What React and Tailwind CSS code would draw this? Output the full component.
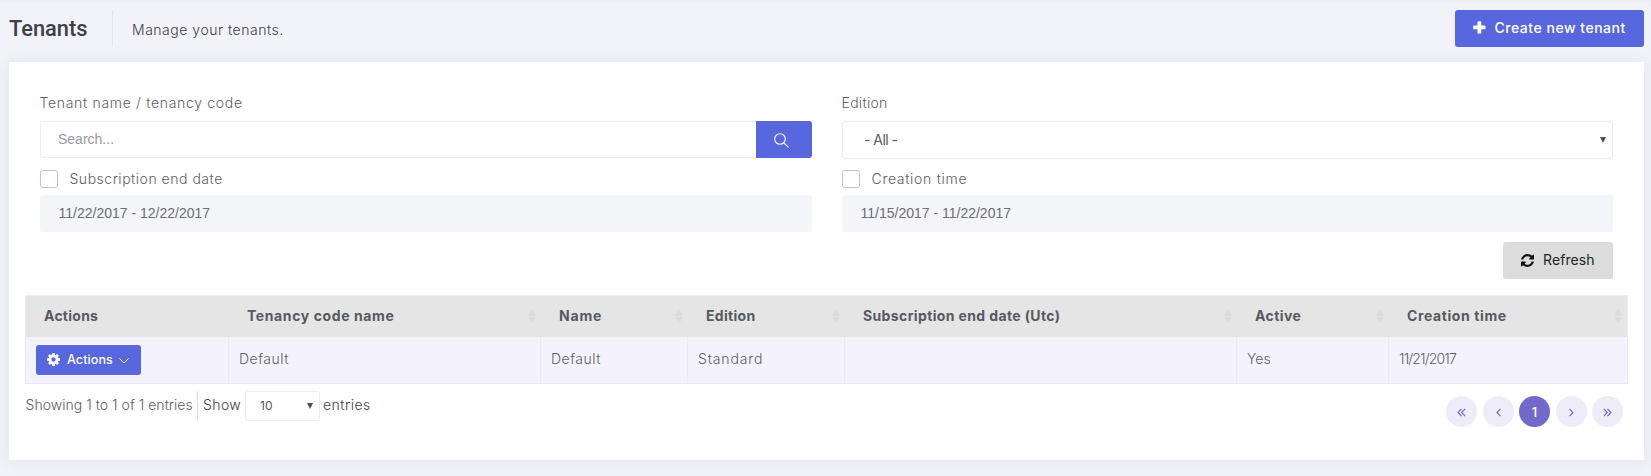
const columns = [
  { label: "Actions", head: "w-[203px] tracking-[0.25px]" },
  { label: "Tenancy code name", head: "w-[312px] tracking-[0.6px]", sort: true, value: "Default", text: "tracking-[0.5px]" },
  { label: "Name", head: "w-[147px] tracking-[0.8px]", sort: true, value: "Default", text: "tracking-[0.5px]" },
  { label: "Edition", head: "w-[157px] tracking-[0.3px]", sort: true, value: "Standard", text: "tracking-[0.85px]" },
  { label: "Subscription end date (Utc)", head: "w-[392px] tracking-[0.37px]", sort: true, value: "" },
  { label: "Active", head: "w-[152px] tracking-[0.4px]", sort: true, value: "Yes", text: "tracking-[0.1px]" },
  { label: "Creation time", head: "w-[238px] tracking-[0.6px]", sort: true, value: "11/21/2017", text: "tracking-[-0.85px]" },
];

const cellWidths = ["w-[203px]", "w-[312px]", "w-[147px]", "w-[157px]", "w-[392px]", "w-[152px]", "w-[240px] border-r"];

function SortIcon() {
  return (
    <svg width="8" height="15" viewBox="0 0 8 15" fill="#dadbdd" className="mr-[5px] shrink-0">
      <path d="M4 0L8 7H0Z" />
      <path d="M0 8H8L4 15Z" />
    </svg>
  );
}

function SelectArrow() {
  return (
    <svg width="6" height="6" viewBox="0 0 6 6" fill="#4b4d5a">
      <path d="M0 0H6L3 6Z" />
    </svg>
  );
}

function SearchIcon() {
  return (
    <svg width="15" height="15" viewBox="0 0 15 15" fill="none" stroke="#fff" strokeWidth="1.1">
      <circle cx="6" cy="6" r="5.3" />
      <path d="M9.8 9.8L14.5 14.3" />
    </svg>
  );
}

function PlusIcon() {
  return (
    <svg width="13" height="13" viewBox="0 0 13 13" fill="#fff" className="-mt-[2px]">
      <rect x="0.2" y="4.500" width="12.300" height="3.800" rx="0.900" />
      <rect x="4.450" y="0.250" width="3.800" height="12.300" rx="0.900" />
    </svg>
  );
}

function GearIcon() {
  return (
    <svg width="13" height="13" viewBox="128 128 1536 1536" fill="#fff" className="-mt-px">
      <path d="M1152 896q0-106-75-181t-181-75-181 75-75 181 75 181 181 75 181-75 75-181zm512-109v222q0 12-8 23t-20 13l-185 28q-19 54-39 91 35 50 107 138 10 12 10 25t-9 23q-27 37-99 108t-94 71q-12 0-26-9l-138-108q-44 23-91 38-16 136-29 186-7 28-36 28h-222q-14 0-24.500-8.500t-11.500-21.500l-28-184q-49-16-90-37l-141 107q-10 9-25 9-14 0-25-11-126-114-165-168-7-10-7-23 0-12 8-23 15-21 51-66.500t54-70.500q-27-50-41-99l-183-27q-13-2-21-12.500t-8-23.500v-222q0-12 8-23t19-13l186-28q14-46 39-92-40-57-107-138-10-12-10-24 0-10 9-23 26-36 98.500-107.500t94.500-71.500q13 0 26 10l138 107q44-23 91-38 16-136 29-186 7-28 36-28h222q14 0 24.500 8.500t11.500 21.500l28 184q49 16 90 37l142-107q9-9 24-9 13 0 25 10 129 119 165 170 7 8 7 22 0 12-8 23-15 21-51 66.500t-54 70.500q26 50 41 98l183 28q13 2 21 12.500t8 23.500z" />
    </svg>
  );
}

function RefreshIcon() {
  return (
    <svg width="13" height="13" viewBox="0 0 1536 1536" fill="#111" className="-mt-px">
      <path d="M1511 928q0 5-1 7-64 268-268 434.500T764 1536q-146 0-282.500-55T238 1324l-129 129q-19 19-45 19t-45-19-19-45V960q0-26 19-45t45-19h448q26 0 45 19t19 45-19 45l-137 137q71 66 161 102t187 36q134 0 250-65t186-179q11-17 53-117 8-23 30-23h192q13 0 22.500 9.500t9.500 22.500zM1536 128v448q0 26-19 45t-45 19h-448q-26 0-45-19t-19-45 19-45l138-138Q969 256 768 256q-134 0-250 65T332 500q-11 17-53 117-8 23-30 23H50q-13 0-22.500-9.500T18 608v-7q65-268 270-434.500T768 0q146 0 284 55.500T1297 212l130-129q19-19 45-19t45 19 19 45z" />
    </svg>
  );
}

function DateFilter({ label, range, tracking }) {
  return (
    <div>
      <div className="flex h-[18px] items-center">
        <span className="size-[18px] rounded-[3px] border border-[#bdc3d4] bg-white" />
        <span className={"ml-[11.5px] " + tracking}>{label}</span>
      </div>
      <div className="mt-[7px] flex h-[37px] items-center rounded-[3px] bg-[#f4f5f8] pb-[2px] pl-[18.5px] font-['Liberation_Sans',sans-serif] text-[14px] font-normal text-[#6b6d78]">
        {range}
      </div>
    </div>
  );
}

function PageButton({ children, active }) {
  return (
    <span className={active
      ? "flex size-[31px] items-center justify-center rounded-full bg-[#716aca] text-[13px] font-medium text-white"
      : "flex size-[31px] items-center justify-center rounded-full bg-[#eeecf8]"}>
      {children}
    </span>
  );
}

function Chevron({ d, w }) {
  return (
    <svg width={w} height="9" viewBox={"0 0 " + w + " 9"} fill="none" stroke="#7069d4" strokeWidth="1.2" className="mt-px">
      <path d={d} />
    </svg>
  );
}

export default function App() {
  return (
    <div className="h-[476px] w-[1651px] overflow-hidden bg-[#f2f3f8] pl-[9px] pr-[7px] pt-[10px] font-['Inter',sans-serif] text-[14px] font-light leading-5 text-[#5c5e68] shadow-[inset_0_3px_2px_-1px_#ecedf3]">
      <header className="flex h-[37px] items-center">
        <h1 className="w-[103px] font-['Roboto',sans-serif] text-[21.800px] font-medium text-[#3f4047]">Tenants</h1>
        <span className="h-[37px] w-px bg-[#e2e5ec]" />
        <p className="ml-[19px] mt-[3px] tracking-[0.52px] text-[#3f4047]">Manage your tenants.</p>
        <button className="ml-auto flex h-[37px] w-[189px] items-center rounded-[3px] bg-[#5867dd] pl-[18px] font-medium text-white">
          <PlusIcon />
          <span className="ml-[8.5px] whitespace-nowrap pb-px tracking-[0.52px]">Create new tenant</span>
        </button>
      </header>

      <main className="mt-[15px] h-[398px] bg-white px-[16px] pt-[31px] shadow-[0_1px_15px_1px_rgba(69,65,78,0.08)]">
        <section className="grid grid-cols-[772px_771px] gap-x-[30px] px-[15px]">
          <div className="h-[77px]">
            <div className="-ml-[0.5px] tracking-[0.68px]">Tenant name / tenancy code</div>
            <div className="mt-[8px] flex h-[37px]">
              <div className="flex flex-1 items-center rounded-l-[3px] border border-r-0 border-[#ebedf2] pb-[2px] pl-[17px] font-['Liberation_Sans',sans-serif] font-normal text-[#9699a2]">Search...</div>
              <button className="flex w-[56px] items-center rounded-r-[3px] bg-[#5867dd] pl-[17.5px] pt-px">
                <SearchIcon />
              </button>
            </div>
          </div>
          <div className="h-[77px]">
            <div className="-ml-[0.5px] tracking-[0.3px]">Edition</div>
            <div className="mt-[8px] flex h-[38px] items-center justify-between rounded-[3px] border border-[#ebedf2] pl-[21px] pr-[6px] font-normal text-[#575962]">
              <span className="tracking-[-0.55px]">- All -</span>
              <SelectArrow />
            </div>
          </div>
          <DateFilter label="Subscription end date" range="11/22/2017 - 12/22/2017" tracking="tracking-[0.52px]" />
          <DateFilter label="Creation time" range="11/15/2017 - 11/22/2017" tracking="tracking-[0.7px]" />
        </section>

        <div className="mt-[10px] flex justify-end pr-[15px]">
          <button className="flex h-[37px] w-[110px] items-center rounded-[3px] bg-[#dcdcdc] pl-[18px] font-normal text-[#212529]">
            <RefreshIcon />
            <span className="ml-[9px] pb-px tracking-[0.1px]">Refresh</span>
          </button>
        </div>

        <div className="mt-[16px] h-[89px] w-[1603px] border-b border-[#e9eaf1]">
          <div className="flex h-[42px] border border-b-0 border-[#ebedf5] bg-[#e5e5e5] font-bold text-[#575962]">
            {columns.map((c, i) => (
              <div key={i} className={"flex shrink-0 items-center justify-between whitespace-nowrap pl-[18px] " + c.head}>
                <span className="pb-[2px]">{c.label}</span>
                {c.sort && <SortIcon />}
              </div>
            ))}
          </div>
          <div className="flex h-[46px] bg-[#f4f3fb]">
            {columns.map((c, i) => (
              <div key={i} className={"flex items-center border-l border-[#e9eaf1] pl-[10px] " + cellWidths[i]}>
                {i === 0 ? (
                  <button className="flex h-[30px] w-[105px] items-center rounded-[3px] bg-[#5867dd] pl-[11px] text-[12.5px] font-medium text-white">
                    <GearIcon />
                    <span className="ml-[7px] w-[45px] pb-px tracking-[0.1px]">Actions</span>
                    <svg width="10" height="6" viewBox="0 0 10 6" fill="none" stroke="#fff" strokeWidth="1" className="ml-[7px] mt-[2px]">
                      <path d="M0.5 0.5L5 5L9.500 0.5" />
                    </svg>
                  </button>
                ) : <span className={"pb-[2px] " + (c.text || "")}>{c.value}</span>}
              </div>
            ))}
          </div>
        </div>

        <footer className="flex">
          <div className="mt-[7px] flex h-[30px] items-center whitespace-nowrap">
            <span className="w-[172px] pb-[2px] pl-[0.5px] tracking-[0.03px]">Showing 1 to 1 of 1 entries</span>
            <span className="h-[30px] w-px bg-[#dcdde2]" />
            <span className="ml-[5px] w-[42px] pb-[2px] tracking-[0.4px] text-[#3f4047]">Show</span>
            <span className="flex h-[30px] w-[75px] items-center justify-between rounded-[3px] border border-[#ebedf2] pl-[14px] pr-[6px] text-[12px] font-normal text-[#575962]">
              10
              <SelectArrow />
            </span>
            <span className="ml-[3px] pb-[2px] tracking-[0.5px] text-[#3f4047]">entries</span>
          </div>
          <nav className="ml-auto mr-[5px] mt-[12px] flex gap-[5.5px]">
            <PageButton><Chevron w={9} d="M4.500 0.800L1 4.500L4.500 8.200M8.200 0.800L4.700 4.500L8.200 8.200" /></PageButton>
            <PageButton><Chevron w={5} d="M4.500 0.800L1 4.500L4.500 8.200" /></PageButton>
            <PageButton active>1</PageButton>
            <PageButton><Chevron w={5} d="M0.500 0.800L4 4.500L0.500 8.200" /></PageButton>
            <PageButton><Chevron w={9} d="M0.800 0.800L4.300 4.500L0.800 8.200M4.500 0.800L8 4.500L4.500 8.200" /></PageButton>
          </nav>
        </footer>
      </main>
    </div>
  );
}
